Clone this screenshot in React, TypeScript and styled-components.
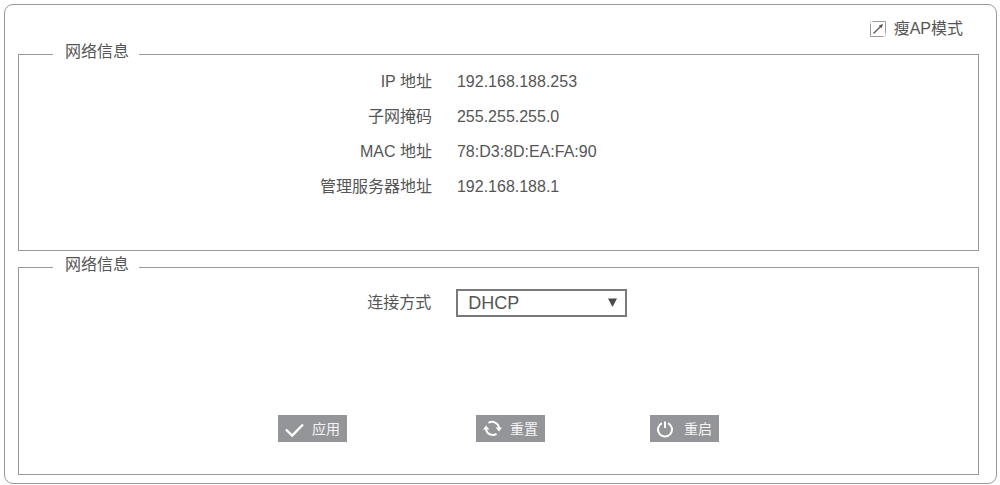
import React from 'react';
import styled, { createGlobalStyle } from 'styled-components';

const GlobalStyle = createGlobalStyle`
  *, *::before, *::after {
    box-sizing: border-box;
  }
  body {
    margin: 0;
    background: #fff;
    color: #555;
    font-family: "Liberation Sans", "Noto Sans CJK SC", sans-serif;
    font-size: 16px;
    line-height: 24px;
  }
`;

const Page = styled.main`
  padding: 4px 3px 1px 4px;
`;

const Panel = styled.div`
  padding: 0 17px 8px 13px;
  border: 1px solid #999;
  border-radius: 9px;
`;

const Header = styled.header`
  display: flex;
  justify-content: flex-end;
  padding: 12px 16px 0 0;
`;

const ModeLink = styled.a`
  display: flex;
  align-items: center;
  gap: 8px;
  color: inherit;
  text-decoration: none;
`;

const Group = styled.fieldset<{ $minHeight: number }>`
  min-width: 0;
  min-height: ${({ $minHeight }) => $minHeight}px;
  margin: 0;
  padding: 0;
  border: 1px solid #999;

  & + & {
    margin-top: 3px;
  }
`;

const Legend = styled.legend`
  margin-left: 34px;
  padding: 1px 10px 5px 12px;
  line-height: 20px;
`;

const InfoList = styled.dl`
  display: grid;
  grid-template-columns: 43% 1fr;
  gap: 11px 25px;
  margin: 0;
  padding: 3px 0 16px 1px;
`;

const Term = styled.dt`
  text-align: right;
`;

const Value = styled.dd`
  margin: 0;
`;

const Field = styled.div`
  display: grid;
  grid-template-columns: 43% 1fr;
  column-gap: 25px;
  align-items: center;
  padding-top: 9px;
`;

const FieldLabel = styled.label`
  text-align: right;
`;

const SelectBox = styled.div`
  position: relative;
  width: 171px;

  svg {
    position: absolute;
    top: 9px;
    right: 10px;
    pointer-events: none;
  }
`;

const Select = styled.select`
  display: block;
  width: 100%;
  height: 28px;
  padding: 0 28px 0 10px;
  border: 2px solid #77797c;
  border-radius: 0;
  appearance: none;
  background: #fff;
  color: inherit;
  font: inherit;
  font-size: 18px;
`;

const Actions = styled.div`
  display: grid;
  grid-template-columns: 198fr 174fr 328fr;
  justify-items: start;
  margin-top: 98px;
  padding: 0 0 32px 27%;
`;

const ActionButton = styled.button`
  display: flex;
  align-items: center;
  gap: 8px;
  height: 27px;
  padding: 0 7px;
  border: 0;
  background: #939598;
  color: #f4f4f4;
  font: inherit;
  font-size: 14px;
  line-height: 20px;
  white-space: nowrap;
  cursor: pointer;
`;

const ModeIcon = () => (
  <svg width="16" height="16" viewBox="0 0 16 16" fill="none" aria-hidden="true">
    <path d="M3 0.5H15.5V12M0.5 3V15.5H13" stroke="#999" />
    <path d="M0.5 3V0.5H3M13 15.5H15.5V12" stroke="#ddd" />
    <path d="M3.5 12.5L11 5" stroke="#555" strokeWidth="1.3" />
    <path d="M13 3L8.8 4.4L11.6 7.2Z" fill="#555" />
  </svg>
);

const CheckIcon = () => (
  <svg width="19" height="19" viewBox="0 0 19 19" fill="none" stroke="#fff" strokeWidth="2.4" aria-hidden="true">
    <path d="M1 10.5L7.2 16.5L18 5.5" />
  </svg>
);

const ResetIcon = () => (
  <svg width="19" height="19" viewBox="0 0 19 19" fill="none" stroke="#fff" strokeWidth="2" aria-hidden="true">
    <path d="M5.5 4A6.8 6.8 0 0 1 16 9" />
    <path d="M13.5 14.8A6.8 6.8 0 0 1 3 9.8" />
    <path d="M12.6 8.5H19L16 12.4Z" fill="#fff" stroke="none" />
    <path d="M0 10.4H6.4L3 6.4Z" fill="#fff" stroke="none" />
  </svg>
);

const PowerIcon = () => (
  <svg width="19" height="19" viewBox="0 0 19 19" fill="none" stroke="#fff" strokeWidth="2" aria-hidden="true">
    <path d="M5 4.1A7 7 0 1 0 11 4.1" />
    <path d="M8 2.5V9" />
  </svg>
);

const networkInfo = [
  { label: 'IP 地址', value: '192.168.188.253' },
  { label: '子网掩码', value: '255.255.255.0' },
  { label: 'MAC 地址', value: '78:D3:8D:EA:FA:90' },
  { label: '管理服务器地址', value: '192.168.188.1' },
];

export default function App() {
  return (
    <>
      <GlobalStyle />
      <Page>
        <Panel>
          <Header>
            <ModeLink href="#mode">
              <ModeIcon />
              瘦AP模式
            </ModeLink>
          </Header>

          <Group $minHeight={210}>
            <Legend>网络信息</Legend>
            <InfoList>
              {networkInfo.map(({ label, value }) => (
                <React.Fragment key={label}>
                  <Term>{label}</Term>
                  <Value>{value}</Value>
                </React.Fragment>
              ))}
            </InfoList>
          </Group>

          <Group $minHeight={221}>
            <Legend>网络信息</Legend>
            <Field>
              <FieldLabel htmlFor="connection">连接方式</FieldLabel>
              <SelectBox>
                <Select id="connection" defaultValue="dhcp">
                  <option value="dhcp">DHCP</option>
                </Select>
                <svg width="9" height="9" viewBox="0 0 9 9" aria-hidden="true">
                  <path d="M0 0.5H9L4.5 9Z" fill="#4a4a4a" />
                </svg>
              </SelectBox>
            </Field>
            <Actions>
              <ActionButton type="button">
                <CheckIcon />
                应用
              </ActionButton>
              <ActionButton type="button">
                <ResetIcon />
                重置
              </ActionButton>
              <ActionButton type="button">
                <PowerIcon />
                重启
              </ActionButton>
            </Actions>
          </Group>
        </Panel>
      </Page>
    </>
  );
}
